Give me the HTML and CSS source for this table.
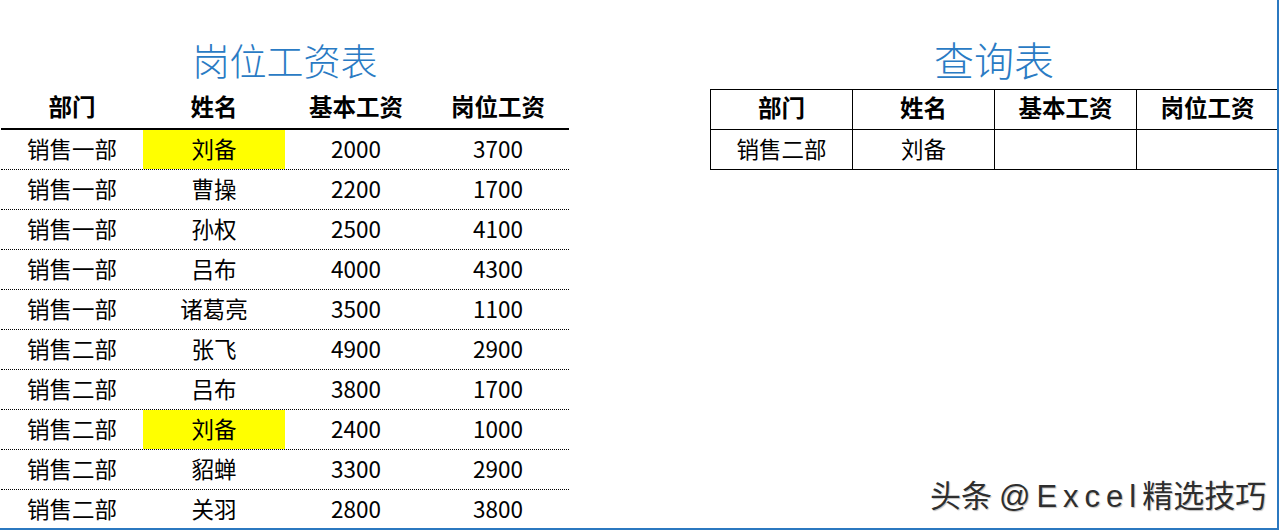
FILE: index.html
```html
<!DOCTYPE html>
<html lang="zh-CN">
<head>
<meta charset="utf-8">
<title>岗位工资表</title>
<link rel="stylesheet" href="styles.css">
</head>
<body>
<div class="page">
  <section class="panel">
    <div class="title">岗位工资表</div>
    <div class="wage">
      <div class="row head"><div class="cell">部门</div><div class="cell">姓名</div><div class="cell">基本工资</div><div class="cell">岗位工资</div></div>
      <div class="row"><div class="cell">销售一部</div><div class="cell hl">刘备</div><div class="cell">2000</div><div class="cell">3700</div></div>
      <div class="row"><div class="cell">销售一部</div><div class="cell">曹操</div><div class="cell">2200</div><div class="cell">1700</div></div>
      <div class="row"><div class="cell">销售一部</div><div class="cell">孙权</div><div class="cell">2500</div><div class="cell">4100</div></div>
      <div class="row"><div class="cell">销售一部</div><div class="cell">吕布</div><div class="cell">4000</div><div class="cell">4300</div></div>
      <div class="row"><div class="cell">销售一部</div><div class="cell">诸葛亮</div><div class="cell">3500</div><div class="cell">1100</div></div>
      <div class="row"><div class="cell">销售二部</div><div class="cell">张飞</div><div class="cell">4900</div><div class="cell">2900</div></div>
      <div class="row"><div class="cell">销售二部</div><div class="cell">吕布</div><div class="cell">3800</div><div class="cell">1700</div></div>
      <div class="row"><div class="cell">销售二部</div><div class="cell hl">刘备</div><div class="cell">2400</div><div class="cell">1000</div></div>
      <div class="row"><div class="cell">销售二部</div><div class="cell">貂蝉</div><div class="cell">3300</div><div class="cell">2900</div></div>
      <div class="row last"><div class="cell">销售二部</div><div class="cell">关羽</div><div class="cell">2800</div><div class="cell">3800</div></div>
    </div>
  </section>
  <section class="panel">
    <div class="title big">查询表</div>
    <div class="query">
      <div class="qcell bold">部门</div><div class="qcell bold">姓名</div><div class="qcell bold">基本工资</div><div class="qcell bold">岗位工资</div>
      <div class="qcell">销售二部</div><div class="qcell">刘备</div><div class="qcell"></div><div class="qcell"></div>
    </div>
  </section>
  <div class="watermark">头条 <span class="latin">@Excel</span>精选技巧</div>
</div>
</body>
</html>
```

FILE: styles.css
```css
html, body {
  margin: 0;
  padding: 0;
  background: #fff;
}

body {
  font-family: "Noto Sans CJK SC", "Noto Sans", sans-serif;
  color: #000;
}

.page {
  position: relative;
  width: 1279px;
  height: 530px;
  box-sizing: border-box;
  border-right: 2px solid #2b78c0;
  border-bottom: 2px solid #2b78c0;
  display: flex;
  gap: 141px;
  padding-left: 1px;
  overflow: hidden;
}

.panel {
  width: 568px;
  flex: none;
}

.title {
  height: 89px;
  box-sizing: border-box;
  padding-top: 36px;
  font-size: 37px;
  line-height: 48px;
  text-align: center;
  color: #2a7bc4;
  font-weight: 300;
}

.title.big {
  font-size: 40px;
  padding-top: 35px;
}

.row {
  display: grid;
  grid-template-columns: repeat(4, 142px);
  height: 40px;
  box-sizing: border-box;
  border-bottom: 1px dotted #000;
  font-size: 22.5px;
}

.row.head {
  height: 41px;
  border-bottom: 2px solid #000;
  font-weight: 700;
  font-size: 23.5px;
}

.row.last {
  border-bottom: none;
}

.cell {
  display: flex;
  align-items: center;
  justify-content: center;
  padding-bottom: 4px;
}

.row.head .cell {
  padding-bottom: 5px;
}

.cell.hl {
  background: #ffff00;
}

.query {
  display: grid;
  grid-template-columns: repeat(4, 142px);
  border-top: 1px solid #000;
  border-left: 1px solid #000;
  width: 568px;
}

.qcell {
  height: 40px;
  box-sizing: border-box;
  border-right: 1px solid #000;
  border-bottom: 1px solid #000;
  display: flex;
  align-items: center;
  justify-content: center;
  padding-bottom: 4px;
  font-size: 22.5px;
}

.qcell.bold {
  font-weight: 700;
  font-size: 23.5px;
  padding-bottom: 5px;
}

.watermark {
  position: absolute;
  left: 930px;
  top: 476px;
  font-size: 31px;
  line-height: 36px;
  color: #2e2e2e;
  white-space: nowrap;
  text-shadow: -1px -1px 0 #fff, 1px 1px 1px rgba(0, 0, 0, 0.25);
}

.watermark .latin {
  font-family: "Liberation Sans", sans-serif;
  letter-spacing: 6px;
}
```
